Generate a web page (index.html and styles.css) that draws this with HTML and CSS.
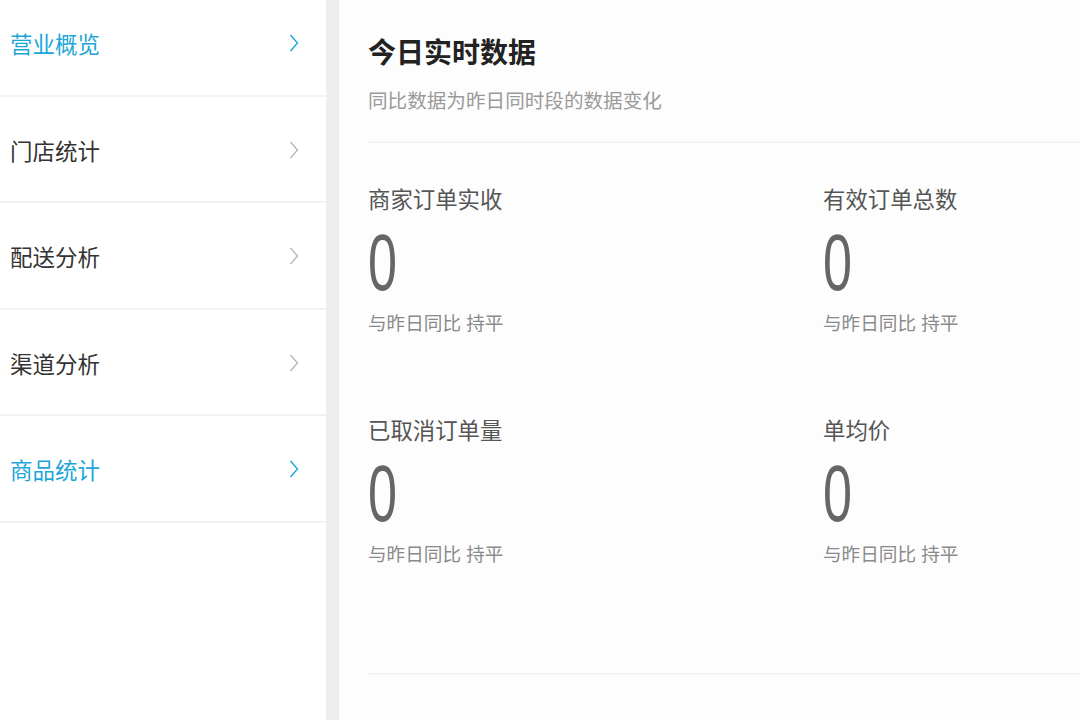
FILE: index.html
```html
<!DOCTYPE html>
<html lang="zh-CN">
<head>
<meta charset="utf-8">
<title>今日实时数据</title>
<link rel="stylesheet" href="styles.css">
</head>
<body>
<div class="layout">
  <nav class="sidebar">
    <ul class="menu">
      <li class="menu-item active"><span class="menu-text">营业概览</span><svg class="chev" viewBox="0 0 10 18" width="10" height="18"><polyline points="1.5,1 8.5,9 1.5,17"/></svg></li>
      <li class="menu-item"><span class="menu-text">门店统计</span><svg class="chev" viewBox="0 0 10 18" width="10" height="18"><polyline points="1.5,1 8.5,9 1.5,17"/></svg></li>
      <li class="menu-item"><span class="menu-text">配送分析</span><svg class="chev" viewBox="0 0 10 18" width="10" height="18"><polyline points="1.5,1 8.5,9 1.5,17"/></svg></li>
      <li class="menu-item"><span class="menu-text">渠道分析</span><svg class="chev" viewBox="0 0 10 18" width="10" height="18"><polyline points="1.5,1 8.5,9 1.5,17"/></svg></li>
      <li class="menu-item active"><span class="menu-text">商品统计</span><svg class="chev" viewBox="0 0 10 18" width="10" height="18"><polyline points="1.5,1 8.5,9 1.5,17"/></svg></li>
    </ul>
  </nav>
  <main class="main">
    <header class="header">
      <h1 class="title">今日实时数据</h1>
      <p class="subtitle">同比数据为昨日同时段的数据变化</p>
    </header>
    <section class="stats">
      <div class="stat">
        <div class="stat-label">商家订单实收</div>
        <div class="stat-value"><span class="num">0</span></div>
        <div class="stat-compare">与昨日同比 持平</div>
      </div>
      <div class="stat">
        <div class="stat-label">有效订单总数</div>
        <div class="stat-value"><span class="num">0</span></div>
        <div class="stat-compare">与昨日同比 持平</div>
      </div>
      <div class="stat">
        <div class="stat-label">已取消订单量</div>
        <div class="stat-value"><span class="num">0</span></div>
        <div class="stat-compare">与昨日同比 持平</div>
      </div>
      <div class="stat">
        <div class="stat-label">单均价</div>
        <div class="stat-value"><span class="num">0</span></div>
        <div class="stat-compare">与昨日同比 持平</div>
      </div>
    </section>
  </main>
</div>
</body>
</html>
```
FILE: styles.css
```css
html, body {
  margin: 0;
  padding: 0;
}
body {
  width: 1080px;
  height: 720px;
  overflow: hidden;
  background: #eeeeee;
  font-family: "Liberation Sans", "Noto Sans CJK SC", sans-serif;
}
.layout {
  display: flex;
  gap: 13px;
  height: 720px;
}
.sidebar {
  width: 326px;
  flex: none;
  background: #ffffff;
  overflow: hidden;
}
.menu {
  list-style: none;
  margin: -10px 0 0 0;
  padding: 0;
}
.menu-item {
  height: 104.5px;
  border-bottom: 2px solid #f2f2f2;
  display: flex;
  align-items: center;
  justify-content: space-between;
  padding: 0 27px 0 10px;
  color: #333333;
  font-size: 22.5px;
}
.menu-text {
  line-height: 1;
  padding-top: 8px;
}
.chev {
  fill: none;
  stroke: #b8b8b8;
  stroke-width: 1.4;
  margin-top: 2px;
}
.menu-item.active {
  color: #1ea6d9;
}
.menu-item.active .chev {
  stroke: #1ea6d9;
}
.main {
  flex: 1;
  background: #fdfdfd;
  padding-left: 29px;
  overflow: hidden;
}
.header {
  height: 143px;
  border-bottom: 2px solid #f3f3f3;
  box-sizing: border-box;
  padding-top: 36px;
}
.title {
  margin: 0;
  font-size: 28px;
  line-height: 36px;
  font-weight: bold;
  color: #222222;
}
.subtitle {
  margin: 16px 0 0 0;
  font-size: 19.6px;
  line-height: 26px;
  color: #9a9a9a;
}
.stats {
  display: grid;
  grid-template-columns: 455px 1fr;
  row-gap: 80px;
  padding: 43px 0 105px 0;
  border-bottom: 2px solid #f3f3f3;
}
.stat-label {
  font-size: 22.4px;
  line-height: 30px;
  color: #555555;
}
.stat-value {
  margin-top: 7px;
  height: 79px;
  line-height: 79px;
  font-size: 79px;
}
.num {
  display: inline-block;
  font-family: "Liberation Sans", sans-serif;
  color: #666666;
  transform: scaleX(0.66);
  transform-origin: left center;
}
.stat-compare {
  margin-top: 9px;
  font-size: 18.6px;
  line-height: 26px;
  color: #8a8a8a;
}
```
